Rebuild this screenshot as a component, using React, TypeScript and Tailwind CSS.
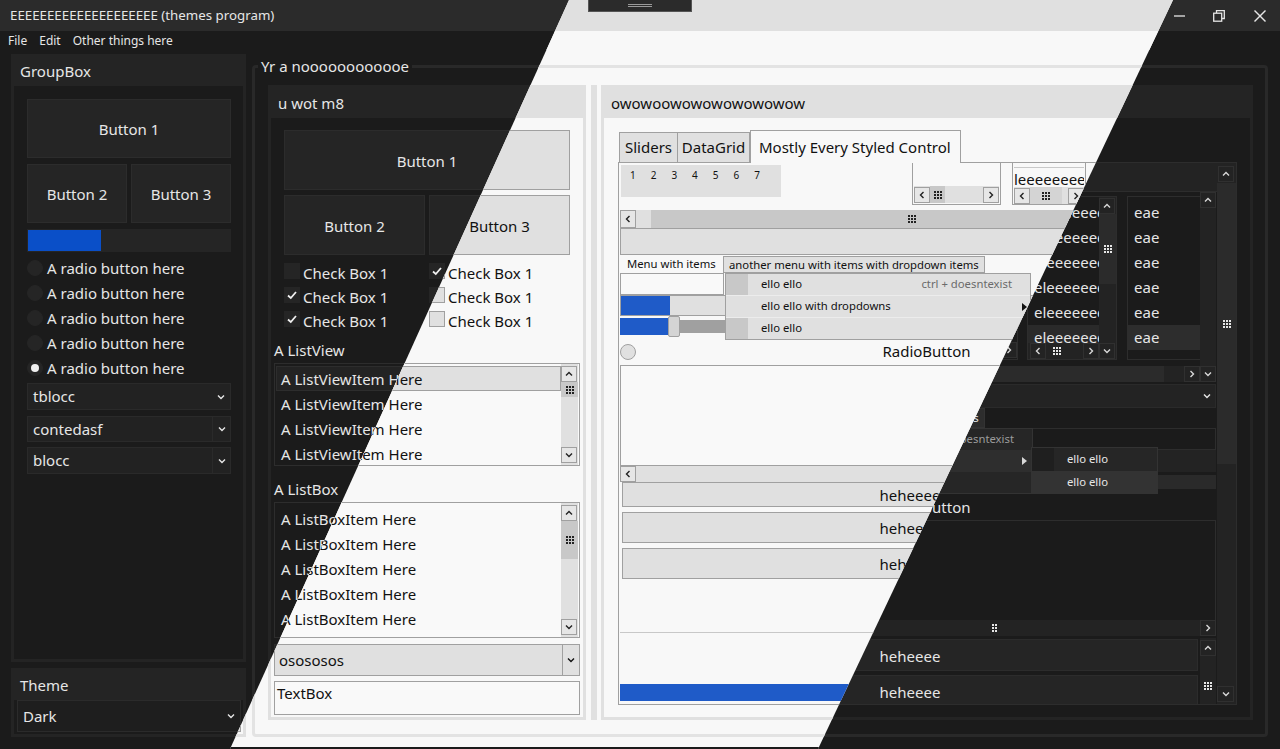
import React from 'react';

type P = {
  dark: boolean;
  title: string;
  menu: string;
  body: string;
  text: string;
  dim: string;
  head: string;
  gbB: string;
  fsB: string;
  btn: string;
  field: string;
  sel: string;
  track: string;
  thumb: string;
  sbBtn: string;
  grip: string;
  chk: string;
  split: string;
  panelB: string;
  prog: string;
  blue: string;
  combo: string;
  comboDiv: string;
  themeCombo: string;
  tabSel: string;
  dot: string;
};

const DARK: P = {
  dark: true,
  title: 'bg-[#2b2b2b] text-[#e6e6e6]',
  menu: 'bg-[#1b1b1b]',
  body: 'bg-[#1b1b1b]',
  text: 'text-[#e6e6e6]',
  dim: 'text-[#9b9b9b]',
  head: 'bg-[#242424]',
  gbB: 'border-[#242424]',
  fsB: 'border-[#292929]',
  btn: 'bg-[#252525] border-[#2c2c2c]',
  field: 'bg-[#1b1b1b] border-[#2d2d2d]',
  sel: 'bg-[#232323] border-[#2d2d2d]',
  track: 'bg-[#232323]',
  thumb: 'bg-[#2b2b2b]',
  sbBtn: 'bg-[#232323] border-[#303030] text-[#d8d8d8]',
  grip: 'text-[#e6e6e6]',
  chk: 'bg-[#252525] border-[#252525] text-[#f0f0f0]',
  split: 'bg-[#232323]',
  panelB: 'border-[#2d2d2d]',
  prog: 'bg-[#252525] border-[#252525]',
  blue: 'bg-[#0a4fc8]',
  combo: 'bg-[#222222] border-[#2a2a2a]',
  comboDiv: 'border-[#2a2a2a]',
  themeCombo: 'bg-[#1e1e1e] border-[#2b2b2b]',
  tabSel: 'bg-[#1b1b1b] border-[#2d2d2d]',
  dot: 'bg-[#f0f0f0]',
};

const LIGHT: P = {
  dark: false,
  title: 'bg-[#e0e0e0] text-[#111111]',
  menu: 'bg-[#f8f8f8]',
  body: 'bg-[#f8f8f8]',
  text: 'text-[#111111]',
  dim: 'text-[#6b6b6b]',
  head: 'bg-[#e0e0e0]',
  gbB: 'border-[#e0e0e0]',
  fsB: 'border-[#e3e3e3]',
  btn: 'bg-[#e0e0e0] border-[#a0a0a0]',
  field: 'bg-[#f9f9f9] border-[#a0a0a0]',
  sel: 'bg-[#e0e0e0] border-[#a0a0a0]',
  track: 'bg-[#e0e0e0]',
  thumb: 'bg-[#c8c8c8]',
  sbBtn: 'bg-[#e6e6e6] border-[#a0a0a0] text-[#222222]',
  grip: 'text-[#222222]',
  chk: 'bg-[#e0e0e0] border-[#a0a0a0] text-[#111111]',
  split: 'bg-[#e0e0e0]',
  panelB: 'border-[#a0a0a0]',
  prog: 'bg-[#e0e0e0] border-[#a0a0a0]',
  blue: 'bg-[#1f5bc8]',
  combo: 'bg-[#e0e0e0] border-[#a0a0a0]',
  comboDiv: 'border-[#a0a0a0]',
  themeCombo: 'bg-[#e0e0e0] border-[#a0a0a0]',
  tabSel: 'bg-[#f8f8f8] border-[#a0a0a0]',
  dot: 'bg-[#111111]',
};

type Dir = 'up' | 'down' | 'left' | 'right';

const Chev = ({ dir, className = '' }: { dir: Dir; className?: string }) => {
  const pts = {
    up: '1,5.5 4,2.5 7,5.5',
    down: '1,2.5 4,5.5 7,2.5',
    left: '5.5,1 2.5,4 5.5,7',
    right: '2.5,1 5.5,4 2.5,7',
  }[dir];
  return (
    <svg width="8" height="8" viewBox="0 0 8 8" className={className}>
      <polyline points={pts} fill="none" stroke="currentColor" strokeWidth="1.4" />
    </svg>
  );
};

const Grip = ({ cols = 3 }: { cols?: number }) => {
  const dots: React.ReactNode[] = [];
  for (let r = 0; r < 3; r++)
    for (let c = 0; c < cols; c++) dots.push(<rect key={`${r}-${c}`} x={c * 3} y={r * 3} width="2" height="2" />);
  const w = cols * 3 - 1;
  return (
    <svg width={w} height="8" viewBox={`0 0 ${w} 8`} fill="currentColor">
      {dots}
    </svg>
  );
};

const SbBtn = ({ p, dir, className = '' }: { p: P; dir: Dir; className?: string }) => (
  <div className={`w-[16px] h-[16px] shrink-0 border flex items-center justify-center ${p.sbBtn} ${className}`}>
    <Chev dir={dir} />
  </div>
);

const VScroll = ({ p, className = '', thumb = 'h-[16px]' }: { p: P; className?: string; thumb?: string }) => (
  <div className={`shrink-0 flex flex-col ${p.track} ${className}`}>
    <SbBtn p={p} dir="up" />
    <div className={`${thumb} shrink-0 flex items-center justify-center ${p.thumb} ${p.grip}`}>
      <Grip />
    </div>
    <div className="flex-1" />
    <SbBtn p={p} dir="down" />
  </div>
);

const Btn = ({ p, className = '', children }: { p: P; className?: string; children: React.ReactNode }) => (
  <div className={`flex items-center justify-center border ${p.btn} ${className}`}>
    <span className="mt-[2px]">{children}</span>
  </div>
);

const Combo = ({ p, text, className = '', divider = false }: { p: P; text: string; className?: string; divider?: boolean }) => (
  <div className={`flex items-center border ${p.combo} ${className}`}>
    <span className="flex-1 pl-[5px]">{text}</span>
    <span className={`w-[18px] h-full flex items-center justify-center ${divider ? `border-l ${p.comboDiv}` : ''}`}>
      <Chev dir="down" />
    </span>
  </div>
);

const TitleBar = ({ p }: { p: P }) => (
  <div className={`relative h-[31px] shrink-0 flex items-center ${p.title}`}>
    <span className="pl-[10px] text-[13.3px]">EEEEEEEEEEEEEEEEEEEE (themes program)</span>
    <div className="ml-auto flex h-full">
      <div className="w-[40px] flex items-center justify-center">
        <svg width="11" height="2" viewBox="0 0 11 2"><line x1="0" y1="1" x2="11" y2="1" stroke="currentColor" strokeWidth="1.3" /></svg>
      </div>
      <div className="w-[40px] flex items-center justify-center">
        <svg width="12" height="12" viewBox="0 0 12 12" fill="none" stroke="currentColor" strokeWidth="1.3">
          <path d="M3.5 3V0.7H11.3V8.5H9" />
          <rect x="0.7" y="3.2" width="8" height="8" />
        </svg>
      </div>
      <div className="w-[41px] flex items-center justify-center">
        <svg width="12" height="12" viewBox="0 0 12 12" stroke="currentColor" strokeWidth="1.4">
          <line x1="0.5" y1="0.5" x2="11.5" y2="11.5" />
          <line x1="11.5" y1="0.5" x2="0.5" y2="11.5" />
        </svg>
      </div>
    </div>
    {!p.dark && (
      <div className="absolute left-[588px] top-0 w-[104px] h-[12px] bg-[#2b2b2b] border border-t-0 border-[#555555] flex flex-col items-center justify-center gap-[1px]">
        <div className="w-[24px] h-px bg-[#9a9a9a]" />
        <div className="w-[24px] h-px bg-[#9a9a9a]" />
      </div>
    )}
  </div>
);

const MenuBar = ({ p }: { p: P }) => (
  <div className={`h-[19px] shrink-0 flex pl-[2px] text-[12px] leading-[19px] ${p.menu}`}>
    <span className="px-[6px]">File</span>
    <span className="px-[6px]">Edit</span>
    <span className="px-[6px]">Other things here</span>
  </div>
);

const LeftColumn = ({ p }: { p: P }) => (
  <div className="w-[235px] shrink-0 flex flex-col text-[15px]">
    <div className={`h-[608px] flex flex-col border-[3px] ${p.gbB}`}>
      <div className={`h-[29px] pl-[6px] leading-[29px] ${p.head}`}>GroupBox</div>
      <div className="flex flex-col pt-[13px] pl-[13px] pr-[12px]">
        <Btn p={p} className="h-[59px]">Button 1</Btn>
        <div className="mt-[6px] flex gap-[4px]">
          <Btn p={p} className="flex-1 h-[59px]">Button 2</Btn>
          <Btn p={p} className="flex-1 h-[59px]">Button 3</Btn>
        </div>
        <div className={`mt-[6px] h-[23px] border ${p.prog}`}>
          <div className={`h-full w-[73px] ${p.blue}`} />
        </div>
        <div className="mt-[3px] flex flex-col">
          {[0, 1, 2, 3, 4].map((i) => (
            <div key={i} className="h-[25px] flex items-center gap-[4px]">
              <span className={`w-[16px] h-[16px] rounded-full border flex items-center justify-center ${p.chk}`}>
                {i === 4 && <span className={`w-[8px] h-[8px] rounded-full ${p.dot}`} />}
              </span>
              <span className="leading-[20px]">A radio button here</span>
            </div>
          ))}
        </div>
        <Combo p={p} text="tblocc" className="mt-[3px] h-[27px]" />
        <Combo p={p} text="contedasf" className="mt-[6px] h-[26px]" divider />
        <Combo p={p} text="blocc" className="mt-[5px] h-[27px]" divider />
      </div>
    </div>
    <div className={`mt-[6px] flex-1 flex flex-col border-[3px] ${p.gbB}`}>
      <div className={`h-[29px] pl-[6px] leading-[29px] ${p.head}`}>Theme</div>
      <div className={`ml-[3px] mr-[2px] h-[32px] border flex items-center ${p.themeCombo}`}>
        <span className="flex-1 pl-[5px]">Dark</span>
        <span className="w-[18px] flex justify-center">
          <Chev dir="down" />
        </span>
      </div>
    </div>
  </div>
);

const Check = ({ p, on }: { p: P; on: boolean }) => (
  <div className="h-[24px] flex items-start">
    <span className={`w-[16px] h-[16px] shrink-0 border flex items-center justify-center ${p.chk}`}>
      {on && (
        <svg width="12" height="12" viewBox="0 0 12 12">
          <polyline points="2,6.5 4.8,9 10,3" fill="none" stroke="currentColor" strokeWidth="1.8" />
        </svg>
      )}
    </span>
    <span className="ml-[3px] mt-px leading-[18px]">Check Box 1</span>
  </div>
);

const WotBox = ({ p }: { p: P }) => (
  <div className={`w-[318px] shrink-0 flex flex-col border-[3px] text-[15px] ${p.gbB}`}>
    <div className={`h-[30px] shrink-0 pl-[7px] leading-[30px] ${p.head}`}>u wot m8</div>
    <div className="flex-1 flex flex-col px-[3px]">
      <div className="px-[10px] pt-[12px]">
        <Btn p={p} className="h-[60px]">Button 1</Btn>
        <div className="mt-[5px] flex gap-[4px]">
          <Btn p={p} className="flex-1 h-[60px]">Button 2</Btn>
          <Btn p={p} className="flex-1 h-[60px]">Button 3</Btn>
        </div>
        <div className="mt-[8px] grid grid-cols-2 gap-x-[4px]">
          <Check p={p} on={false} />
          <Check p={p} on />
          <Check p={p} on />
          <Check p={p} on={false} />
          <Check p={p} on />
          <Check p={p} on={false} />
        </div>
      </div>
      <div className="mt-[3px] h-[24px] leading-[24px]">A ListView</div>
      <div className={`mt-[1px] h-[103px] border flex ${p.field}`}>
        <div className="flex-1 min-w-0 pt-[2px] pl-[1px] overflow-hidden">
          {[0, 1, 2, 3].map((i) => (
            <div key={i} className={`h-[25px] pl-[4px] leading-[25px] border whitespace-nowrap ${i === 0 ? p.sel : 'border-transparent'}`}>
              A ListViewItem Here
            </div>
          ))}
        </div>
        <VScroll p={p} className="w-[17px] mr-[1px] py-[2px]" thumb="h-[15px]" />
      </div>
      <div className="mt-[11px] h-[24px] leading-[24px]">A ListBox</div>
      <div className={`mt-[1px] h-[136px] border flex ${p.field}`}>
        <div className="flex-1 min-w-0 pt-[4px] pl-[6px] overflow-hidden">
          {[0, 1, 2, 3, 4].map((i) => (
            <div key={i} className="h-[25px] leading-[25px] whitespace-nowrap">
              A ListBoxItem Here
            </div>
          ))}
        </div>
        <VScroll p={p} className="w-[17px] mr-[1px] py-[2px]" thumb="h-[38px]" />
      </div>
      <div className={`mt-[6px] h-[32px] border flex items-center ${p.combo}`}>
        <span className="flex-1 pl-[4px]">osososos</span>
        <span className={`w-[17px] h-full border-l flex items-center justify-center ${p.comboDiv}`}>
          <Chev dir="down" />
        </span>
      </div>
      <div className={`mt-[5px] h-[34px] border pl-[2px] pt-px leading-[20px] ${p.field}`}>TextBox</div>
    </div>
  </div>
);

const HBtnRow = ({ p, className = '', children }: { p: P; className?: string; children: React.ReactNode }) => (
  <div className={`flex ${p.track} ${className}`}>{children}</div>
);

const LightTab = ({ p }: { p: P }) => (
  <div className="flex-1 min-w-0 flex flex-col overflow-hidden">
    <div className="h-[42px] shrink-0 flex items-start">
      <div className="ml-[2px] mt-[2px] w-[160px] h-[32px] bg-[#e0e0e0] flex pl-[9px] pt-[3px] text-[10px] leading-[14px]">
        {['1', '2', '3', '4', '5', '6', '7'].map((n) => (
          <span key={n} className="w-[20.7px]">{n}</span>
        ))}
      </div>
      <div className="ml-[131px] w-[89px] h-[42px] border border-t-0 border-[#a0a0a0] flex flex-col justify-end">
        <HBtnRow p={p} className="h-[17px] mx-[1px] mb-[1px] items-center">
          <SbBtn p={p} dir="left" />
          <div className={`w-[15px] h-full flex items-center justify-center ${p.thumb} ${p.grip}`}><Grip /></div>
          <div className="flex-1" />
          <SbBtn p={p} dir="right" />
        </HBtnRow>
      </div>
      <div className="ml-[11px] w-[74px] h-[42px] border border-t-0 border-[#a0a0a0] flex flex-col">
        <div className="mt-[4px] mx-[1px] h-[20px] border-t border-[#c8c8c8] overflow-hidden whitespace-nowrap text-[15px] leading-[22px]">leeeeeeeeeeeeeee</div>
        <HBtnRow p={p} className="h-[17px] mx-[1px] items-center">
          <SbBtn p={p} dir="left" />
          <div className={`w-[32px] h-full flex items-center justify-center bg-[#d4d4d4] ${p.grip}`}><Grip /></div>
          <div className="flex-1" />
          <SbBtn p={p} dir="right" />
        </HBtnRow>
      </div>
    </div>
    <HBtnRow p={p} className="mt-[5px] ml-[1px] mr-px h-[18px] shrink-0">
      <SbBtn p={p} dir="left" className="h-[18px]" />
      <div className="w-[15px]" />
      <div className={`w-[522px] flex items-center justify-center ${p.thumb} ${p.grip}`}><Grip /></div>
      <div className="flex-1" />
      <SbBtn p={p} dir="right" className="h-[18px]" />
    </HBtnRow>
    <div className="mx-[1px] h-[27px] shrink-0 border bg-[#e0e0e0] border-[#a0a0a0]" />
    <div className="mt-[1px] h-[17px] shrink-0 flex text-[11.3px] leading-[15px]">
      <span className="w-[104px] pl-[8px] whitespace-nowrap">Menu with items</span>
      <span className="px-[5px] border bg-[#e0e0e0] border-[#a0a0a0] whitespace-nowrap">another menu with items with dropdown items</span>
    </div>
    <div className="relative h-[68px] shrink-0 flex flex-col">
      <div className={`ml-[1px] w-[104px] h-[22px] border ${p.field}`} />
      <div className={`mx-[1px] h-[21px] border ${p.prog}`}>
        <div className={`w-[49px] h-full ${p.blue}`} />
      </div>
      <div className="mx-[1px] h-[21px] flex items-center">
        <div className={`w-[48px] h-[17px] ${p.blue}`} />
        <div className="w-[12px] h-[21px] bg-[#d4d4d4] border border-[#a0a0a0] rounded-[2px]" />
        <div className="flex-1 h-[13px] bg-[#a0a0a0]" />
      </div>
      <div className="absolute left-[106px] top-0 w-[306px] h-[67px] bg-[#e0e0e0] border border-[#a0a0a0] flex flex-col text-[11.3px]">
        <div className="h-[22px] flex items-center border-b border-[#ececec]">
          <div className="w-[22px] h-full bg-[#c8c8c8]" />
          <span className="pl-[13px]">ello ello</span>
          <span className="ml-auto pr-[18px] text-[#6b6b6b]">ctrl + doesntexist</span>
        </div>
        <div className="h-[22px] flex items-center border-b border-[#ececec]">
          <div className="w-[22px] h-full" />
          <span className="pl-[13px]">ello ello with dropdowns</span>
          <svg className="ml-auto mr-[2px]" width="6" height="8" viewBox="0 0 6 8"><polygon points="0,0 5,4 0,8" fill="#111111" /></svg>
        </div>
        <div className="flex-1 flex items-center">
          <div className="w-[22px] h-full bg-[#c8c8c8]" />
          <span className="pl-[13px]">ello ello</span>
        </div>
      </div>
    </div>
    <div className="mt-[1px] h-[19px] shrink-0 flex items-center">
      <span className="ml-[1px] w-[16px] h-[16px] rounded-full border bg-[#e0e0e0] border-[#a0a0a0]" />
      <span className="flex-1 text-center text-[15px]">RadioButton</span>
    </div>
    <div className={`mt-[4px] mx-[1px] h-[100px] shrink-0 border border-b-0 ${p.field}`} />
    <HBtnRow p={p} className="mx-[1px] h-[17px] shrink-0 border-t border-[#a0a0a0]">
      <SbBtn p={p} dir="left" />
    </HBtnRow>
    <div className="ml-[3px] w-[576px] flex flex-col text-[15px]">
      <Btn p={p} className="h-[25px]">heheeee</Btn>
      <Btn p={p} className="mt-[5px] h-[31px]">heheeee</Btn>
      <Btn p={p} className="mt-[5px] h-[31px]">heheeee</Btn>
    </div>
    <div className="mt-[53px] mx-[1px] h-px shrink-0 bg-[#c8c8c8]" />
    <div className={`mt-[51px] mx-[1px] h-[17px] shrink-0 ${p.blue}`} />
  </div>
);

const ListCol = ({ items, selClass }: { items: string; selClass: string }) => (
  <>
    {[0, 1, 2, 3, 4, 5].map((i) => (
      <div key={i} className={`h-[25px] shrink-0 pl-[6px] leading-[25px] whitespace-nowrap overflow-hidden ${i === 5 ? selClass : ''}`}>
        {items}
      </div>
    ))}
  </>
);

const DarkTab = ({ p }: { p: P }) => (
  <div className="flex-1 min-w-0 flex flex-col overflow-hidden text-[15px]">
    <div className="h-[29px] shrink-0 flex">
      <div className="ml-[381px] flex-1 bg-[#232323] border-b border-[#2d2d2d]" />
    </div>
    <div className="h-[190px] shrink-0 flex">
      <div className="flex-1 min-w-0 flex flex-col">
        <div className="h-[174px] flex items-start">
          <div className={`ml-[341px] mt-[4px] w-[58px] h-[164px] border flex flex-col justify-end ${p.field}`}>
            <div className="h-[16px] flex justify-end mb-px">
              <SbBtn p={p} dir="right" />
            </div>
          </div>
          <div className={`ml-[9px] mt-[4px] w-[90px] h-[164px] border flex ${p.field}`}>
            <div className="flex-1 min-w-0 flex flex-col">
              <div className="h-[146px] pt-[3px] overflow-hidden flex flex-col">
                <ListCol items="eleeeeeeeeeee" selClass="bg-[#2a2a2a]" />
              </div>
              <HBtnRow p={p} className="h-[16px] items-center">
                <SbBtn p={p} dir="left" className="ml-[2px]" />
                <div className={`w-[22px] h-full flex items-center justify-center ${p.grip}`}><Grip /></div>
                <div className="flex-1" />
                <SbBtn p={p} dir="right" />
              </HBtnRow>
            </div>
            <VScroll p={p} className="w-[17px] pt-[1px]" thumb="h-[70px]" />
          </div>
          <div className={`ml-[10px] mt-[4px] w-[73px] h-[164px] border border-r-0 flex flex-col pt-[3px] overflow-hidden ${p.field}`}>
            <ListCol items="eae" selClass="bg-[#2d2d2d]" />
          </div>
        </div>
        <div className="h-[16px] flex">
          <div className="flex-1 bg-[#2b2b2b]" />
          <div className="w-[20px] bg-[#232323]" />
          <SbBtn p={p} dir="right" />
        </div>
      </div>
      <div className={`w-[16px] mr-px flex flex-col ${p.track}`}>
        <SbBtn p={p} dir="up" />
        <div className="flex-1" />
        <SbBtn p={p} dir="down" />
      </div>
    </div>
    <div className="mt-[2px] mr-px h-[24px] shrink-0 border bg-[#232323] border-[#2a2a2a] flex items-center justify-end pr-[4px]">
      <Chev dir="down" />
    </div>
    <div className="h-[20px] shrink-0 flex text-[11.3px] leading-[18px]">
      <span className="w-[104px] pl-[8px] whitespace-nowrap">Menu with items</span>
      <span className="px-[5px] border bg-[#2d2d2d] border-[#333333] whitespace-nowrap">another menu with items with dropdown items</span>
    </div>
    <div className="relative h-[66px] shrink-0 flex flex-col mr-px">
      <div className={`h-[22px] border ${p.field}`} />
      <div className="h-[22px] bg-[#232323]">
        <div className={`w-[49px] h-full ${p.blue}`} />
      </div>
      <div className="h-[20px] flex items-center">
        <div className={`w-[48px] h-[14px] ${p.blue}`} />
        <div className="w-[12px] h-[20px] bg-[#3a3a3a]" />
        <div className="flex-1 h-[14px] bg-[#2a2a2a]" />
      </div>
      <div className="absolute left-[106px] top-0 w-[308px] h-[66px] bg-[#262626] border border-[#333333] flex flex-col text-[11.3px]">
        <div className="h-[21px] flex items-center">
          <div className="w-[22px] h-full bg-[#202020]" />
          <span className="pl-[13px]">ello ello</span>
          <span className={`ml-auto pr-[18px] ${p.dim}`}>ctrl + doesntexist</span>
        </div>
        <div className="h-[22px] flex items-center bg-[#2e2e2e]">
          <div className="w-[22px] h-full" />
          <span className="pl-[13px]">ello ello with dropdowns</span>
          <svg className="ml-auto mr-[4px]" width="6" height="8" viewBox="0 0 6 8"><polygon points="0,0 5,4 0,8" fill="#d8d8d8" /></svg>
        </div>
        <div className="flex-1 flex items-center">
          <div className="w-[22px] h-full bg-[#202020]" />
          <span className="pl-[13px]">ello ello</span>
        </div>
      </div>
      <div className="absolute left-[412px] top-[19px] w-[127px] h-[47px] bg-[#262626] border border-[#333333] flex flex-col text-[11.3px]">
        <div className="h-[23px] flex items-center">
          <div className="w-[22px] h-full bg-[#1f1f1f]" />
          <span className="pl-[13px]">ello ello</span>
        </div>
        <div className="flex-1 flex items-center bg-[#333333]">
          <span className="pl-[35px]">ello ello</span>
        </div>
      </div>
    </div>
    <div className="h-[26px] shrink-0 flex items-center">
      <span className={`ml-[1px] w-[16px] h-[16px] rounded-full border ${p.chk}`} />
      <span className="flex-1 text-center">RadioButton</span>
    </div>
    <div className={`mr-px h-[100px] shrink-0 border border-b-0 ${p.field}`} />
    <div className={`mr-px h-[16px] shrink-0 flex items-center ${p.track}`}>
      <SbBtn p={p} dir="left" />
      <div className={`ml-[357px] ${p.grip}`}><Grip cols={2} /></div>
      <div className="flex-1" />
      <SbBtn p={p} dir="right" />
    </div>
    <div className="mt-[2px] flex-1 min-h-0 flex">
      <div className="ml-[3px] w-[576px] flex flex-col">
        <Btn p={p} className="mt-[1px] h-[32px] shrink-0">heheeee</Btn>
        <Btn p={p} className="mt-[4px] h-[32px] shrink-0">heheeee</Btn>
      </div>
      <div className={`ml-[2px] w-[16px] flex flex-col ${p.track}`}>
        <SbBtn p={p} dir="up" className="mt-[2px]" />
        <div className={`mt-[26px] flex justify-center ${p.grip}`}><Grip /></div>
      </div>
    </div>
  </div>
);

const OwoBox = ({ p }: { p: P }) => (
  <div className={`flex-1 min-w-0 flex flex-col border-[3px] ${p.gbB}`}>
    <div className={`h-[30px] shrink-0 pl-[7px] leading-[30px] text-[15px] ${p.head}`}>owowoowowowowowowow</div>
    <div className="flex-1 min-h-0 flex flex-col pl-[14px] pr-[13px] pt-[12px] pb-[12px]">
      <div className="h-[32px] shrink-0 flex items-end pl-[1px] text-[15px]">
        <div className={`w-[59px] h-[31px] -mb-px border flex items-center justify-center ${p.btn}`}>Sliders</div>
        <div className={`w-[72px] h-[31px] -mb-px border border-l-0 flex items-center justify-center ${p.btn}`}>DataGrid</div>
        <div className={`relative z-10 w-[211px] h-[33px] -mb-px border border-b-0 flex items-center pl-[8px] whitespace-nowrap ${p.tabSel}`}>
          Mostly Every Styled Control
        </div>
      </div>
      <div className={`flex-1 min-h-0 flex border ${p.panelB}`}>
        {p.dark ? <DarkTab p={p} /> : <LightTab p={p} />}
        <div className={`w-[19px] shrink-0 flex flex-col ${p.track}`}>
          <SbBtn p={p} dir="up" className="mt-[3px] ml-[1px]" />
          <div className={`mt-px h-[281px] flex items-center justify-center ${p.thumb} ${p.grip}`}><Grip /></div>
          <div className="flex-1" />
          <SbBtn p={p} dir="down" className="mb-[2px] w-[17px]" />
        </div>
      </div>
    </div>
  </div>
);

const Screen = ({ p }: { p: P }) => (
  <div className={`isolate w-[1280px] h-[749px] flex flex-col font-['Noto_Sans',sans-serif] ${p.body} ${p.text}`}>
    <TitleBar p={p} />
    <MenuBar p={p} />
    <div className="flex-1 min-h-0 flex gap-[6px] pl-[11px] pr-[12px] pt-[4px] pb-[10px]">
      <LeftColumn p={p} />
      <fieldset className={`flex-1 min-w-0 mt-[3px] flex flex-col border-[3px] rounded-[4px] pt-[10px] pl-[13px] pr-[12px] pb-[14px] ${p.fsB}`}>
        <legend className="-ml-[10px] px-[3px] text-[15px] leading-[18px]">Yr a noooooooooooe</legend>
        <div className="flex-1 min-h-0 flex">
          <WotBox p={p} />
          <div className={`ml-[5px] mr-[4px] w-[6px] shrink-0 ${p.split}`} />
          <OwoBox p={p} />
        </div>
      </fieldset>
    </div>
    <div className="h-[2px] shrink-0 bg-[#1b1b1b]" />
  </div>
);

export default function App() {
  return (
    <div className="relative isolate w-[1280px] h-[749px] overflow-hidden">
      <Screen p={DARK} />
      <div className="absolute inset-0 z-20 [clip-path:polygon(569px_0,1173px_0,818px_749px,230px_749px)]">
        <Screen p={LIGHT} />
      </div>
    </div>
  );
}
